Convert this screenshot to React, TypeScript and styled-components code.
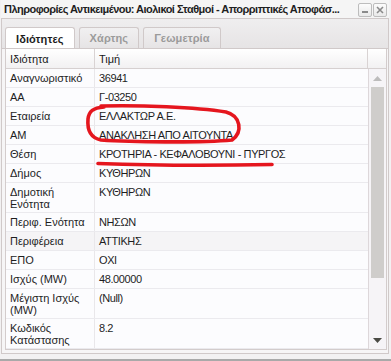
import React from "react"
import styled, { createGlobalStyle } from "styled-components"

const GlobalStyle = createGlobalStyle`
  html, body {
    margin: 0;
    padding: 0;
    background: #ffffff;
  }
  body {
    font-family: "Liberation Sans", Arial, sans-serif;
    font-size: 11px;
    color: #222;
  }
`

const Window = styled.div`
  position: relative;
  width: 391px;
  height: 361px;
  box-sizing: border-box;
  background: #f2f1f2;
  border-bottom: 2px solid #a9a9a9;
  display: flex;
  flex-direction: column;
  padding: 0 2px 5px 1px;
  overflow: hidden;
`

const TitleBar = styled.div`
  height: 18px;
  display: flex;
  align-items: center;
  justify-content: space-between;
  padding: 0 2px 0 3px;
  background: #f5f5f5;
`

const Title = styled.div`
  flex: 1;
  min-width: 0;
  font-weight: bold;
  font-size: 11px;
  letter-spacing: -0.52px;
  color: #1f1f1f;
  white-space: nowrap;
  overflow: hidden;
`

const Tools = styled.div`
  flex: none;
  display: flex;
  gap: 1px;
  margin-top: 1px;
`

const ToolButton = styled.div`
  width: 12px;
  height: 12px;
  border: 1px solid #bdbdbd;
  border-radius: 2px;
  background: linear-gradient(#fcfcfc, #e9e9e9);
  display: flex;
  align-items: center;
  justify-content: center;
`

const Panel = styled.div`
  flex: 1;
  display: flex;
  flex-direction: column;
  border: 1px solid #d0c9c9;
  background: #eeecee;
  min-height: 0;
`

const TabStrip = styled.div`
  height: 29px;
  flex: none;
  box-sizing: border-box;
  display: flex;
  align-items: flex-end;
  gap: 4px;
  padding: 0 0 0 3px;
  background: linear-gradient(#efeeef, #e6e4e5);
`

const Tab = styled.div<{ $active?: boolean }>`
  box-sizing: border-box;
  padding: 0 10px;
  display: flex;
  align-items: center;
  font-weight: bold;
  font-size: 11px;
  letter-spacing: 0.1px;
  border: 1px solid #d0c9c9;
  border-bottom: none;
  border-radius: 3px 3px 0 0;
  color: ${p => (p.$active ? "#1e1e1e" : "#9b9b9b")};
  background: ${p => (p.$active ? "#ffffff" : "linear-gradient(#f1f0f1, #e6e4e5)")};
  margin-bottom: ${p => (p.$active ? "-1px" : "0")};
  height: ${p => (p.$active ? "22px" : "21px")};
`

const Content = styled.div`
  flex: 1;
  min-height: 0;
  background: #f6f5f6;
  padding: 0 1px 3px 3px;
  border-top: 1px solid #d0c9c9;
  display: flex;
`

const Grid = styled.div`
  flex: 1;
  display: flex;
  flex-direction: column;
  border: 1px solid #d3cccc;
  border-top: none;
  background: #fff;
  min-height: 0;
`

const HeaderRow = styled.div`
  height: 20px;
  flex: none;
  box-sizing: border-box;
  display: grid;
  grid-template-columns: 89px 1fr 18px;
  background: linear-gradient(#ffffff, #f2f1f2);
  border-bottom: 1px solid #d6d0d0;
`

const HeaderCell = styled.div`
  padding: 4px 4px 0;
  line-height: 12px;
  color: #1a1a1a;
  border-right: 1px solid #d9d3d3;
  &:last-child {
    border-right: none;
  }
`

const Body = styled.div`
  flex: 1;
  display: flex;
  min-height: 0;
`

const Rows = styled.div`
  flex: 1;
  overflow: hidden;
`

const Row = styled.div<{ $tall?: boolean; $hot?: boolean }>`
  height: ${p => (p.$tall ? "30px" : "19px")};
  box-sizing: border-box;
  display: grid;
  grid-template-columns: 89px 1fr;
  border-bottom: 1px solid #ebeaee;
  background: ${p => (p.$hot ? "#f5f4f6" : "#fcfcfe")};
`

const Cell = styled.div`
  padding: 3px 4px 0;
  line-height: 12px;
  color: #1e1e1e;
  letter-spacing: -0.4px;
  &:first-child {
    border-right: 1px solid #e9e7ea;
    letter-spacing: 0;
  }
`

const ScrollBar = styled.div`
  width: 18px;
  flex: none;
  box-sizing: border-box;
  border-left: 1px solid #ddd7da;
  background: #f6f4f7;
  display: flex;
  flex-direction: column;
  align-items: center;
`

const Arrow = styled.div`
  height: 18px;
  flex: none;
  display: flex;
  align-items: center;
  justify-content: center;
`

const Thumb = styled.div`
  width: 13px;
  height: 191px;
  flex: none;
  background: #cfcdcb;
`

const Track = styled.div`
  flex: 1;
`

const Annotation = styled.svg`
  position: absolute;
  left: 0;
  top: 0;
  pointer-events: none;
`

type Prop = { name: string; value: string; tall?: boolean; hot?: boolean }

const props: Prop[] = [
  { name: "Αναγνωριστικό", value: "36941" },
  { name: "ΑΑ", value: "Γ-03250" },
  { name: "Εταιρεία", value: "ΕΛΛΑΚΤΩΡ Α.Ε." },
  { name: "ΑΜ", value: "ΑΝΑΚΛΗΣΗ ΑΠΟ ΑΙΤΟΥΝΤΑ" },
  { name: "Θέση", value: "ΚΡΟΤΗΡΙΑ - ΚΕΦΑΛΟΒΟΥΝΙ - ΠΥΡΓΟΣ" },
  { name: "Δήμος", value: "ΚΥΘΗΡΩΝ" },
  { name: "Δημοτική Ενότητα", value: "ΚΥΘΗΡΩΝ", tall: true },
  { name: "Περιφ. Ενότητα", value: "ΝΗΣΩΝ" },
  { name: "Περιφέρεια", value: "ΑΤΤΙΚΗΣ", hot: true },
  { name: "ΕΠΟ", value: "ΟΧΙ" },
  { name: "Ισχύς (MW)", value: "48.00000" },
  { name: "Μέγιστη Ισχύς (MW)", value: "(Null)", tall: true },
  { name: "Κωδικός Κατάστασης", value: "8.2", tall: true },
]

export default function App() {
  return (
    <>
      <GlobalStyle />
      <Window>
        <TitleBar>
          <Title>Πληροφορίες Αντικειμένου: Αιολικοί Σταθμοί - Απορριπτικές Αποφάσ...</Title>
          <Tools>
            <ToolButton>
              <svg width="8" height="8" viewBox="0 0 8 8">
                <rect x="1" y="5" width="6" height="2" fill="#8a8a8a" />
              </svg>
            </ToolButton>
            <ToolButton>
              <svg width="8" height="8" viewBox="0 0 8 8">
                <path d="M1 1 L7 7 M7 1 L1 7" stroke="#8a8a8a" strokeWidth="1.6" />
              </svg>
            </ToolButton>
          </Tools>
        </TitleBar>

        <Panel>
          <TabStrip>
            <Tab $active>Ιδιότητες</Tab>
            <Tab>Χάρτης</Tab>
            <Tab>Γεωμετρία</Tab>
          </TabStrip>
          <Content>
            <Grid>
              <HeaderRow>
                <HeaderCell>Ιδιότητα</HeaderCell>
                <HeaderCell>Τιμή</HeaderCell>
                <HeaderCell />
              </HeaderRow>
              <Body>
                <Rows>
                  {props.map(p => (
                    <Row key={p.name} $tall={p.tall} $hot={p.hot}>
                      <Cell>{p.name}</Cell>
                      <Cell>{p.value}</Cell>
                    </Row>
                  ))}
                </Rows>
                <ScrollBar>
                  <Arrow>
                    <svg width="9" height="5" viewBox="0 0 9 5">
                      <path d="M0 5 L4.5 0 L9 5 Z" fill="#bdbcbc" />
                    </svg>
                  </Arrow>
                  <Thumb />
                  <Track />
                  <Arrow>
                    <svg width="9" height="5" viewBox="0 0 9 5">
                      <path d="M0 0 L9 0 L4.5 5 Z" fill="#4a4a44" />
                    </svg>
                  </Arrow>
                </ScrollBar>
              </Body>
            </Grid>
          </Content>
        </Panel>

        <Annotation width="391" height="361" viewBox="0 0 391 361">
          <g fill="none" stroke="#e5161e" strokeWidth="3.6" strokeLinecap="round" strokeLinejoin="round">
            <path d="M101 106 C140 105 195 107 226 112 C241 116 243 132 232 140 C200 143 130 142 101 140 C91 138 87 131 88 119 C89 111 93 108 104 107" />
            <path d="M98 163.5 Q180 166.5 272 164.5" />
          </g>
        </Annotation>
      </Window>
    </>
  )
}
